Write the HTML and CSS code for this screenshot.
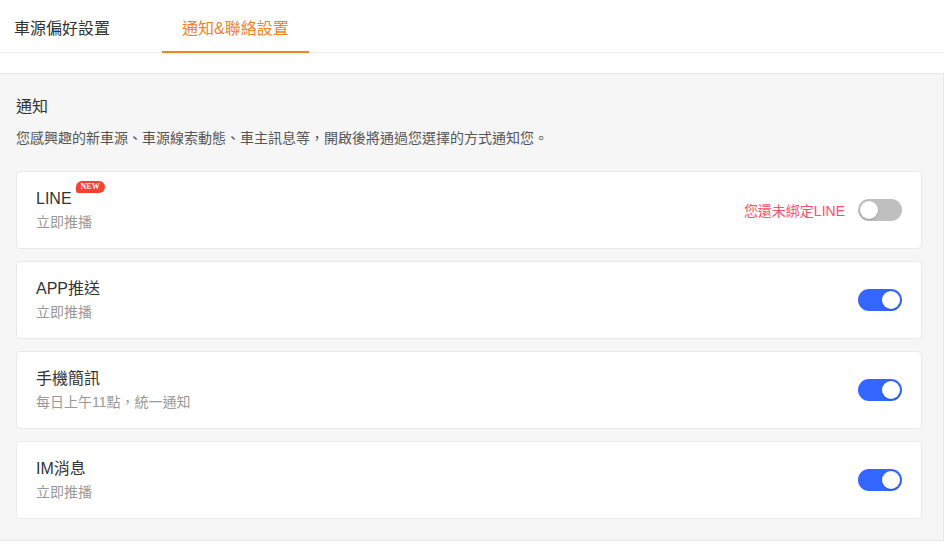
FILE: index.html
```html
<!DOCTYPE html>
<html lang="zh-Hant">
<head>
    <meta charset="utf-8">
    <title>通知&amp;聯絡設置</title>
    <link rel="stylesheet" href="styles.css">
</head>
<body>
    <nav class="tabs">
        <a class="tab">車源偏好設置</a>
        <a class="tab active">通知&amp;聯絡設置</a>
    </nav>

    <main class="panel">
        <h3 class="panel-title">通知</h3>
        <p class="panel-desc">您感興趣的新車源、車源線索動態、車主訊息等，開啟後將通過您選擇的方式通知您。</p>

        <div class="card">
            <div class="card-text">
                <div class="card-name">LINE<span class="badge">NEW</span></div>
                <div class="card-sub">立即推播</div>
            </div>
            <div class="card-right">
                <span class="warn">您還未綁定LINE</span>
                <span class="switch"></span>
            </div>
        </div>

        <div class="card">
            <div class="card-text">
                <div class="card-name">APP推送</div>
                <div class="card-sub">立即推播</div>
            </div>
            <div class="card-right">
                <span class="switch on"></span>
            </div>
        </div>

        <div class="card">
            <div class="card-text">
                <div class="card-name">手機簡訊</div>
                <div class="card-sub">每日上午11點，統一通知</div>
            </div>
            <div class="card-right">
                <span class="switch on"></span>
            </div>
        </div>

        <div class="card">
            <div class="card-text">
                <div class="card-name">IM消息</div>
                <div class="card-sub">立即推播</div>
            </div>
            <div class="card-right">
                <span class="switch on"></span>
            </div>
        </div>
    </main>
</body>
</html>
```

FILE: styles.css
```css
html,
body {
    background-color: white;
    color: #333;
}

body {
    margin: 0;
    padding: 0;
    width: 944px;
    font-family: "Liberation Sans", "Noto Sans CJK TC", sans-serif;
}

.tabs {
    display: flex;
    height: 53px;
    border-bottom: 1px solid #eee;
    box-sizing: border-box;
}

.tab {
    display: flex;
    align-items: center;
    padding: 2px 14px 0;
    margin-right: 38px;
    font-size: 16px;
    color: #333;
}

.tab.active {
    padding: 2px 20px 0;
    color: #f5821f;
    border-bottom: 2px solid #f5821f;
    margin-bottom: -1px;
}

.panel {
    display: block;
    margin-top: 20px;
    padding: 16px 21px 21px 16px;
    background-color: #f6f6f6;
    border: 1px solid #e8e8e8;
    border-left: none;
}

.panel-title {
    margin: 5px 0 0;
    font-size: 16px;
    font-weight: normal;
    line-height: 24px;
}

.panel-desc {
    margin: 9px 0 23px;
    font-size: 14px;
    line-height: 20px;
    color: #555;
}

.card {
    display: flex;
    align-items: center;
    justify-content: space-between;
    height: 78px;
    box-sizing: border-box;
    margin-bottom: 12px;
    padding: 0 19px;
    background-color: white;
    border: 1px solid #ebebeb;
    border-radius: 4px;
}

.card:last-child {
    margin-bottom: 0;
}

.card-name {
    font-size: 16px;
    line-height: 20px;
    position: relative;
}

.card-sub {
    margin-top: 4px;
    font-size: 14px;
    line-height: 18px;
    color: #999;
}

.badge {
    position: absolute;
    top: -8px;
    margin-left: 4px;
    padding: 0 5px;
    height: 12px;
    line-height: 12px;
    font-family: "Liberation Serif", serif;
    font-size: 8px;
    font-weight: bold;
    color: white;
    background-color: #f5412e;
    border-radius: 6px 6px 6px 2px;
}

.card-right {
    display: flex;
    align-items: center;
    gap: 13px;
}

.warn {
    font-size: 14px;
    color: #ff4d6a;
}

.switch {
    display: block;
    width: 44px;
    height: 22px;
    border-radius: 11px;
    background-color: #bfbfbf;
    position: relative;
}

.switch::after {
    content: "";
    position: absolute;
    top: 2px;
    left: 2px;
    width: 18px;
    height: 18px;
    border-radius: 50%;
    background-color: white;
    box-shadow: 0 1px 2px rgba(0, 0, 0, 0.2);
}

.switch.on {
    background-color: #3366ff;
}

.switch.on::after {
    left: 24px;
}
```
